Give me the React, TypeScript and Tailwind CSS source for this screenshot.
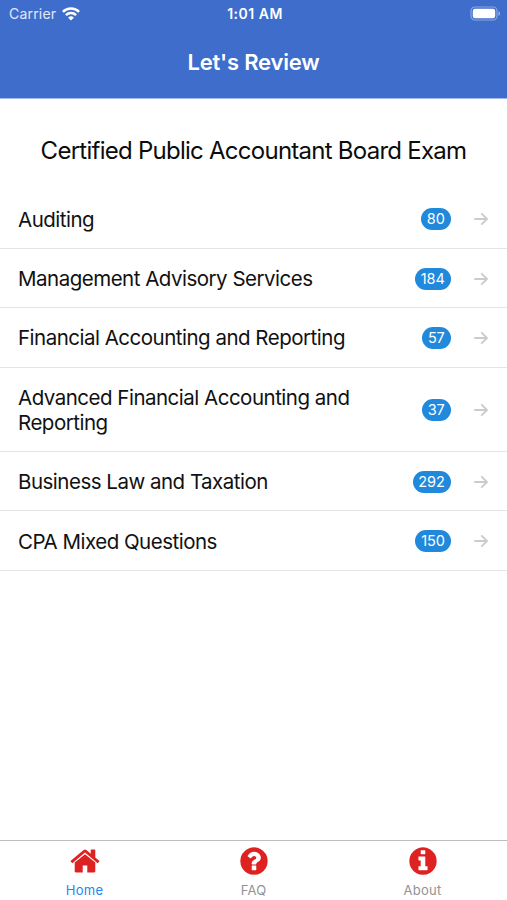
import clsx from 'clsx'

interface Category {
  title: string
  count: number
}

interface TabItemProps {
  label: string
  path: string
  active?: boolean
}

const categories: Category[] = [
  { title: 'Auditing', count: 80 },
  { title: 'Management Advisory Services', count: 184 },
  { title: 'Financial Accounting and Reporting', count: 57 },
  { title: 'Advanced Financial Accounting and Reporting', count: 37 },
  { title: 'Business Law and Taxation', count: 292 },
  { title: 'CPA Mixed Questions', count: 150 },
]

// Tab glyphs, all on a 1792 x 1792 grid
const tabs: TabItemProps[] = [
  {
    label: 'Home',
    active: true,
    path: 'M1472 992v480q0 26-19 45t-45 19h-384v-384h-256v384h-384q-26 0-45-19t-19-45v-480q0-1 .5-3t.5-3l575-474 575 474q1 2 1 6zm223-69l-62 74q-8 9-21 11h-3q-13 0-21-7l-692-577-692 577q-12 8-24 7-13-2-21-11l-62-74q-8-10-7-23.5t11-21.5l719-599q32-26 76-26t76 26l244 204v-195q0-14 9-23t23-9h192q14 0 23 9t9 23v408l219 182q10 8 11 21.5t-7 23.5z',
  },
  {
    label: 'FAQ',
    path: 'M1024 1376v-192q0-14-9-23t-23-9h-192q-14 0-23 9t-9 23v192q0 14 9 23t23 9h192q14 0 23-9t9-23zm256-672q0-88-55.5-163t-138.5-116-170-41q-243 0-371 213-15 24 8 42l132 100q7 6 19 6 16 0 25-12 53-68 86-92 34-24 86-24 48 0 85.5 26t37.5 59q0 38-20 61t-68 45q-63 28-115.5 86.5t-52.5 125.5v36q0 14 9 23t23 9h192q14 0 23-9t9-23q0-19 21.5-49.5t54.5-49.5q32-18 49-28.5t46-35 44.5-48 28-60.5 12.5-81zm384 192q0 209-103 385.5t-279.5 279.5-385.5 103-385.5-103-279.5-279.5-103-385.5 103-385.5 279.5-279.5 385.5-103 385.5 103 279.5 279.5 103 385.5z',
  },
  {
    label: 'About',
    path: 'M1152 1376v-160q0-14-9-23t-23-9h-96v-512q0-14-9-23t-23-9h-320q-14 0-23 9t-9 23v160q0 14 9 23t23 9h96v320h-96q-14 0-23 9t-9 23v160q0 14 9 23t23 9h448q14 0 23-9t9-23zm-128-896v-160q0-14-9-23t-23-9h-192q-14 0-23 9t-9 23v160q0 14 9 23t23 9h192q14 0 23-9t9-23zm640 416q0 209-103 385.5t-279.5 279.5-385.5 103-385.5-103-279.5-279.5-103-385.5 103-385.5 279.5-279.5 385.5-103 385.5 103 279.5 279.5 103 385.5z',
  },
]

function WifiIcon() {
  return (
    <svg
      aria-hidden="true"
      viewBox="0 0 18 14"
      className="ml-[6px] h-[14px] w-[18px]"
      fill="none"
      stroke="white"
      strokeWidth="2.5"
    >
      <path d="M.9 4.9a11.5 11.5 0 0 1 16.2 0" />
      <path d="M3.9 8.2a7.2 7.2 0 0 1 10.2 0" />
      <path d="M9 13.6 6.1 10.7a4.1 4.1 0 0 1 5.8 0Z" fill="white" stroke="none" />
    </svg>
  )
}

function BatteryIcon() {
  return (
    <svg aria-hidden="true" viewBox="0 0 31 15" className="h-[15px] w-[31px]">
      <rect
        x="1"
        y="1"
        width="26"
        height="13"
        rx="4"
        fill="none"
        stroke="white"
        strokeOpacity=".4"
        strokeWidth="1.2"
      />
      <rect x="2.8" y="2.8" width="22.4" height="9.4" rx="2.2" fill="white" />
      <path d="M28.5 5.2c2 .8 2 3.8 0 4.6Z" fill="white" fillOpacity=".5" />
    </svg>
  )
}

function ArrowIcon() {
  return (
    <svg
      aria-hidden="true"
      viewBox="0 0 14 14"
      className="ml-[23px] h-[14px] w-[14px] shrink-0"
      fill="none"
      stroke="#cbcbcb"
      strokeWidth="1.8"
      strokeLinecap="round"
      strokeLinejoin="round"
    >
      <path d="M1 7h12M7.8 1.8 13 7l-5.2 5.2" />
    </svg>
  )
}

function Header() {
  return (
    <header className="h-[99px] border-b border-[#a3b8e8] bg-[#3e6dcc] text-white">
      <div className="grid h-[27px] grid-cols-3 items-center pr-[6px] pl-[9px] text-[14px]">
        <div className="flex items-center">
          <span className="tracking-[0.2px] text-white/85">Carrier</span>
          <WifiIcon />
        </div>
        <span className="text-center font-semibold tracking-[0.5px]">
          1:01 AM
        </span>
        <div className="flex justify-end">
          <BatteryIcon />
        </div>
      </div>
      <h1 className="mt-[20px] text-center text-[22px] leading-[30px] font-semibold tracking-[-0.2px]">
        Let's Review
      </h1>
    </header>
  )
}

function CategoryRow({ title, count }: Category) {
  return (
    <li className="flex items-center border-b border-[#e4e4e5] pt-[17.4px] pr-[19.5px] pb-[16.05px] pl-[18px]">
      <span className="max-w-[350px] text-[20.5px] leading-[25px] tracking-[-0.5px] text-[#111]">
        {title}
      </span>
      <span className="ml-auto flex h-[22px] items-center rounded-full bg-[#2089dc] px-[5.8px] text-[14.5px] tracking-[-0.1px] text-white">
        {count}
      </span>
      <ArrowIcon />
    </li>
  )
}

function TabItem({ label, path, active }: TabItemProps) {
  return (
    <button type="button" className="flex flex-1 flex-col items-center pt-[4px]">
      <svg
        aria-hidden="true"
        viewBox="0 0 1792 1792"
        className="size-8 fill-[#de2222]"
      >
        <path d={path} />
      </svg>
      <span
        className={clsx(
          'mt-[4px] text-[13px] leading-[18px] tracking-[0.25px]',
          active ? 'text-[#2188f3]' : 'text-[#929292]',
        )}
      >
        {label}
      </span>
    </button>
  )
}

export default function App() {
  return (
    <div className="flex h-[900px] w-[507px] flex-col bg-white font-['Inter','Liberation_Sans',sans-serif]">
      <Header />
      <main className="flex-1">
        <h2 className="pt-[37px] text-center text-[24px] leading-[30px] tracking-[-0.74px] text-[#0c0c0c]">
          Certified Public Accountant Board Exam
        </h2>
        <ul className="mt-[23.2px]">
          {categories.map((category) => (
            <CategoryRow key={category.title} {...category} />
          ))}
        </ul>
      </main>
      <nav className="flex h-[60px] border-t border-[#bdbdbd]">
        {tabs.map((tab) => (
          <TabItem key={tab.label} {...tab} />
        ))}
      </nav>
    </div>
  )
}
